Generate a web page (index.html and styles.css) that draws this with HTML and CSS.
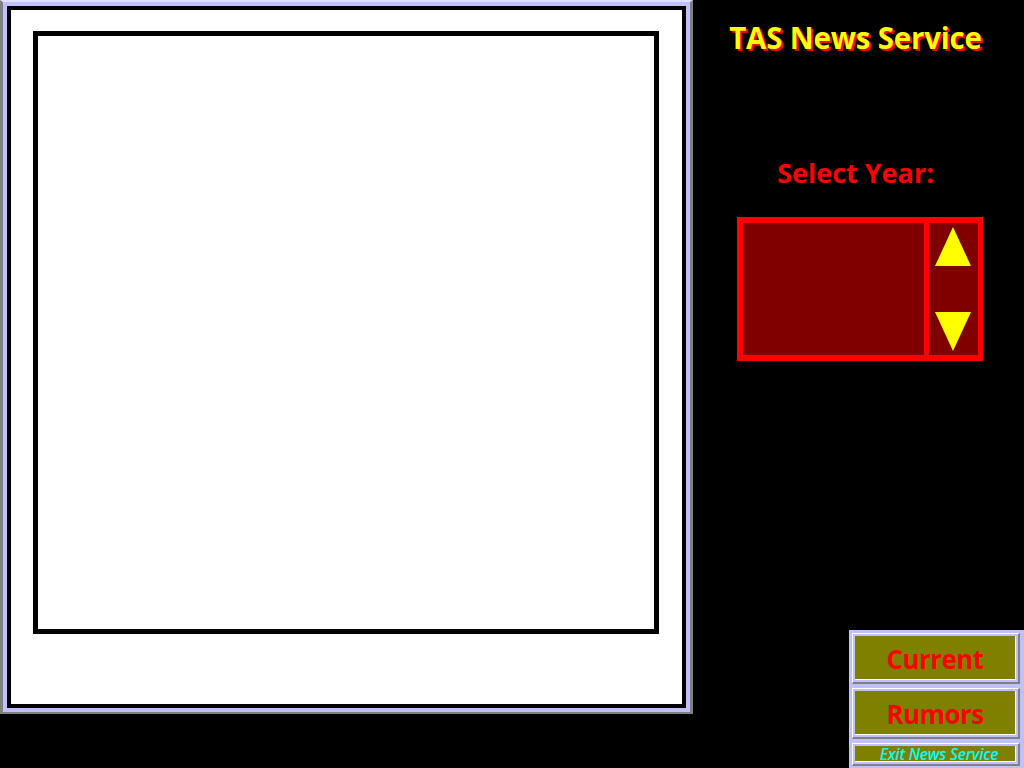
FILE: index.html
```html
<!DOCTYPE html>
<html>
<head>
<meta charset="utf-8">
<title>TAS News Service</title>
<link rel="stylesheet" href="styles.css">
</head>
<body>
<div class="screen">
  <div class="frame">
    <div class="paper">
      <div class="viewer"></div>
    </div>
  </div>
  <div class="side">
    <h1 class="title">TAS News Service</h1>
    <div class="label">Select Year:</div>
    <div class="spinner">
      <div class="spin-value"></div>
      <div class="spin-arrows">
        <svg class="arrow" width="36" height="39" viewBox="0 0 36 39"><polygon points="18,0 36,39 0,39" fill="#ffff00"/></svg>
        <svg class="arrow" width="36" height="39" viewBox="0 0 36 39"><polygon points="0,0 36,0 18,39" fill="#ffff00"/></svg>
      </div>
    </div>
    <div class="buttons">
      <div class="btn"><div class="btn-face big">Current</div></div>
      <div class="btn"><div class="btn-face big">Rumors</div></div>
      <div class="btn"><div class="btn-face small">Exit News Service</div></div>
    </div>
  </div>
</div>
</body>
</html>
```

FILE: styles.css
```css
html, body {
  margin: 0;
  padding: 0;
  background: #000000;
}

.screen {
  width: 1024px;
  height: 768px;
  display: flex;
  flex-direction: row;
  overflow: hidden;
  font-family: "Open Sans", "Liberation Sans", sans-serif;
}

.frame {
  width: 693px;
  height: 714px;
  box-sizing: border-box;
  border-left: 3px solid #808080;
  border-right: 3px solid #808080;
  border-bottom: 2px solid #808080;
  border-top: 2px solid #e0e0ff;
  background: #c0c0ff;
  padding: 4px;
  flex-shrink: 0;
}

.paper {
  height: 100%;
  box-sizing: border-box;
  border: 4px solid #000000;
  background: #ffffff;
  padding: 21px 0 0 22px;
}

.viewer {
  width: 626px;
  height: 603px;
  box-sizing: border-box;
  border: 5px solid #000000;
}

.side {
  flex: 1;
  display: flex;
  flex-direction: column;
  align-items: center;
}

.title {
  margin: 19px 0 0 -6px;
  font-size: 29.5px;
  font-weight: 700;
  color: #ffff00;
  text-shadow: 2px 2px 0 #ff0000;
  line-height: 38px;
  letter-spacing: -0.2px;
}

.label {
  margin: 98px 0 0 -6px;
  font-size: 27px;
  font-weight: 700;
  color: #ff0000;
  line-height: 36px;
}

.spinner {
  margin: 26px 0 0 3px;
  width: 246px;
  height: 144px;
  box-sizing: border-box;
  border: 6px solid #ff0000;
  border-right-width: 5px;
  background: #800000;
  display: flex;
}

.spin-value {
  flex: 1;
}

.spin-arrows {
  width: 54px;
  box-sizing: border-box;
  border-left: 5px solid #ff0000;
  display: flex;
  flex-direction: column;
  justify-content: space-between;
  padding: 4px 0 4px 6px;
}

.arrow {
  display: block;
}

.buttons {
  margin-top: auto;
  align-self: flex-end;
  width: 175px;
  height: 138px;
  box-sizing: border-box;
  background: #c0c0ff;
  padding: 3px 4px 0 3px;
  display: flex;
  flex-direction: column;
  gap: 4px;
}

.btn {
  box-sizing: border-box;
  border-top: 1px solid #ffffff;
  border-left: 1px solid #ffffff;
  border-right: 2px solid #808080;
  border-bottom: 2px solid #808080;
  padding: 2px;
  height: 51px;
}

.btn:last-child {
  height: 23px;
}

.btn-face {
  height: 100%;
  box-sizing: border-box;
  background: #808000;
  border-right: 1px solid #ffffff;
  border-bottom: 1px solid #ffffff;
  display: flex;
  align-items: center;
  justify-content: center;
}

.big {
  color: #ff0000;
  font-size: 26px;
  font-weight: 700;
  letter-spacing: -0.6px;
  padding-top: 2px;
}

.small {
  color: #00ffff;
  font-size: 15.5px;
  font-style: italic;
  font-weight: 600;
  letter-spacing: -0.2px;
  padding-left: 8px;
}
```
